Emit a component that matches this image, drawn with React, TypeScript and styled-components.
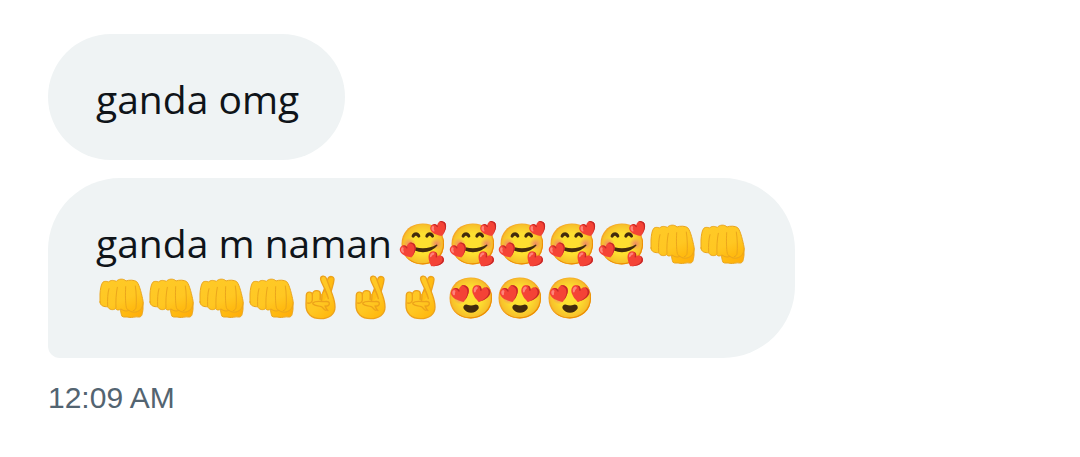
import React from "react";
import styled, { createGlobalStyle } from "styled-components";

const Global = createGlobalStyle`
  body { margin: 0; background: #ffffff; }
`;

const Thread = styled.main`
  display: flex;
  flex-direction: column;
  align-items: flex-start;
  gap: 18px;
  padding: 34px 48px;
  color: #0f1419;
  font: 400 39px/54px "Open Sans", sans-serif;
`;

const Bubble = styled.p<{ $last?: boolean }>`
  margin: 0;
  padding: 38px 46px 34px 48px;
  max-width: 653px;
  background: #eff3f4;
  border-radius: 72px;
  border-bottom-left-radius: ${(p) => (p.$last ? "12px" : "72px")};
`;

const EmojiRun = styled.span`
  margin-left: -4px;
  font-family: "Noto Color Emoji", sans-serif;
  font-size: 40px;
  line-height: 0;
`;

const Hand = styled.svg`
  display: inline-block;
  width: 50px;
  height: 50px;
  margin: -8px 0;
  vertical-align: -4px;
`;

const Stamp = styled.time`
  margin-top: 4px;
  color: #536471;
  font: 400 30px/36px "Liberation Sans", sans-serif;
`;

const GradientDefs = styled.svg`
  position: absolute;
  width: 0;
  height: 0;
`;

function Gradients() {
  return (
    <GradientDefs aria-hidden="true">
      <defs>
        <linearGradient id="skin" x1="0" y1="0" x2="0.6" y2="1">
          <stop offset="0" stopColor="#ffca28" />
          <stop offset="0.7" stopColor="#ffc722" />
          <stop offset="1" stopColor="#ffba10" />
        </linearGradient>
        <linearGradient id="thumb" x1="0" y1="0" x2="1" y2="0">
          <stop offset="0" stopColor="#ffbc12" />
          <stop offset="1" stopColor="#ffad08" />
        </linearGradient>
      </defs>
    </GradientDefs>
  );
}

function Fist() {
  return (
    <Hand viewBox="0 0 150 150" role="img" aria-label="fist" fill="none" stroke="#eba51c" strokeWidth="3" strokeLinecap="round" strokeLinejoin="round">
      <path
        d="M74 103C73 116 77 122 77 126C83 132 91 127 99 130C108 132 119 127 128 129C139 130 139 118 141 106L141 84L116 94Z"
        fill="url(#thumb)"
      />
      <path
        d="M12 84L12 60C13 44 15 34 19 27C23 20 33 22 38 24C43 17 55 19 61 22C67 14 83 13 90 21C98 17 117 18 122 23C131 32 138 66 141 80C143 94 136 106 129 110C117 118 105 114 99 109C91 113 83 111 75 105C68 110 61 108 59 104C52 109 39 108 35 98C25 99 12 96 12 84Z"
        fill="url(#skin)"
      />
      <path d="M39 44C35 56 34 78 35 96M64 40C60 58 59 84 60 102M89 38C88 60 88 87 91 100C92 105 95 108 99 109M118 36C121 55 122 83 120 101C119 106 116 109 112 110" />
    </Hand>
  );
}

function Fingers() {
  return (
    <Hand viewBox="0 0 150 150" role="img" aria-label="crossed fingers" fill="none" stroke="#eda21a" strokeWidth="4" strokeLinecap="round" strokeLinejoin="round">
      <path
        d="M78 62C84 47 90 34 95 17C98 4 115 5 114 17C113 31 107 44 104 58L96 78Z"
        fill="#ffbc12"
      />
      <path
        d="M30 91L31 63C32 52 47 52 49 61C52 46 71 47 73 58L75 78L92 66C90 58 88 50 86 44C81 33 76 26 74 17C72 5 87 3 91 13C96 28 102 42 107 56C112 70 117 82 117 99C117 122 98 134 74 134C47 134 29 119 30 91Z"
        fill="url(#skin)"
      />
      <path d="M76 78L76 62L88 52L94 66L82 82Z" fill="#ffbf17" stroke="none" />
      <path d="M49 62L49 78C48 86 41 89 35 87M73 59L72 76M78 62L77 80M86 44C90 54 95 62 97 74" />
      <path d="M50 87C58 80 70 82 82 83C93 83 98 80 100 87C101 95 94 97 87 96C91 103 91 106 96 110M51 90C58 97 67 94 76 98C82 100 82 107 90 109" />
    </Hand>
  );
}

const times = (n: number, draw: (i: number) => React.ReactNode) => Array.from({ length: n }, (_, i) => draw(i));

export default function App() {
  return (
    <Thread>
      <Global />
      <Gradients />
      <Bubble>ganda omg</Bubble>
      <Bubble $last>
        ganda m naman{" "}
        <EmojiRun>
          🥰🥰🥰🥰🥰
          {times(6, (i) => <Fist key={i} />)}
          {times(3, (i) => <Fingers key={i} />)}
          😍😍😍
        </EmojiRun>
      </Bubble>
      <Stamp>12:09 AM</Stamp>
    </Thread>
  );
}
